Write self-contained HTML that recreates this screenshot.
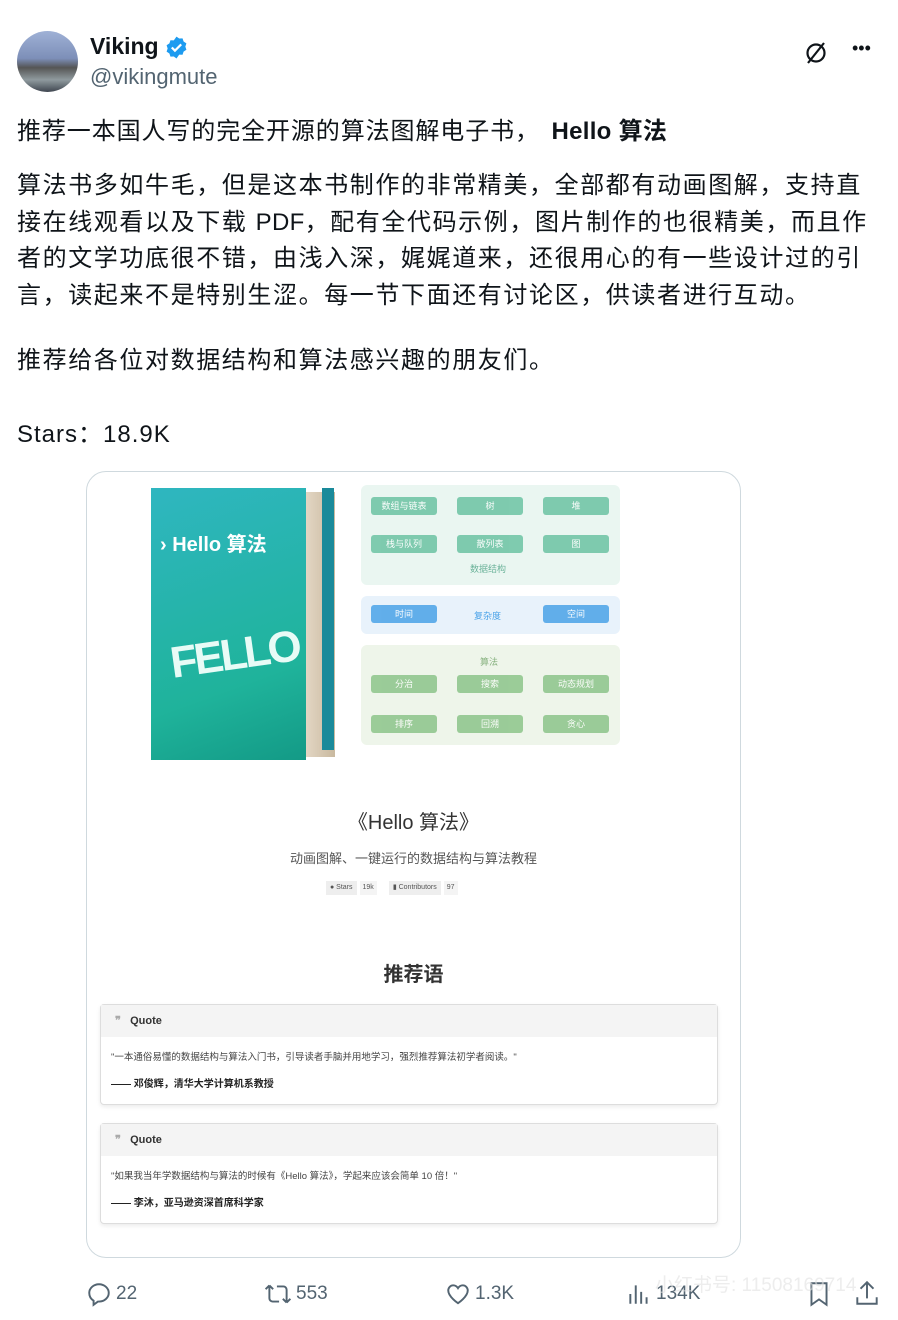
<!DOCTYPE html>
<html><head><meta charset="utf-8"><style>
*{margin:0;padding:0;box-sizing:border-box}
body{width:898px;height:1320px;background:#fff;font-family:"Liberation Sans","Noto Sans CJK SC",sans-serif;color:#0f1419;position:relative;overflow:hidden}
.abs{position:absolute}
.t{font-size:24px;line-height:36.5px;left:17px;white-space:nowrap;letter-spacing:1.6px}
.l{letter-spacing:0.3px}
.bx{position:absolute;width:66px;height:18px;border-radius:3px;color:#fff;font-size:9px;text-align:center;line-height:18px;opacity:.85}
.g{background:#6cc3a3}.b{background:#4aa3e8}.gg{background:#8cc48a}
.q{position:absolute;left:100px;width:618px;height:101px;border:1px solid #ddd;border-radius:4px;box-shadow:0 2px 4px rgba(0,0,0,.08);background:#fff}
.qh{height:32px;background:#f4f4f4;font-size:11px;font-weight:bold;color:#333;line-height:32px;padding-left:14px}
.qt{font-size:9.5px;color:#444;padding:12px 0 0 10px}
.qa{font-size:10px;font-weight:bold;color:#222;padding:12px 0 0 10px}
.act{position:absolute;top:1281px;font-size:19px;color:#536471;display:flex;align-items:center;gap:4px}
</style></head><body>
<div class="abs" style="left:17px;top:31px;width:61px;height:61px;border-radius:50%;background:linear-gradient(#9fb1d6 0%,#7d8fb8 45%,#555 60%,#8f9a9e 80%,#3f4650)"></div>
<div class="abs" style="left:90px;top:33px;font-size:23px;font-weight:bold">Viking</div>
<svg class="abs" style="left:164px;top:35px" width="25" height="25" viewBox="0 0 24 24"><path fill="#1d9bf0" d="M12 1.5l2.6 1.9 3.2-.2 1 3 2.7 1.8-1 3.1 1 3.1-2.7 1.8-1 3-3.2-.2L12 22.5l-2.6-1.9-3.2.2-1-3-2.7-1.8 1-3.1-1-3.1 2.7-1.8 1-3 3.2.2z"/><path d="M7.5 12l3 3 6-6" stroke="#fff" stroke-width="2.2" fill="none"/></svg>
<div class="abs" style="left:90px;top:64px;font-size:22px;color:#536471">@vikingmute</div>
<svg class="abs" style="left:803px;top:40px" width="26" height="26" viewBox="0 0 26 26"><circle cx="13" cy="13" r="8.5" fill="none" stroke="#0f1419" stroke-width="2.2"/><path d="M21 3L5 23" stroke="#0f1419" stroke-width="2.2"/></svg>
<div class="abs" style="left:852px;top:38px;font-size:18px;color:#0f1419">•••</div>
<div class="abs t" style="top:114px;letter-spacing:0.9px">推荐一本国人写的完全开源的算法图解电子书， <b class="l" style="margin-left:4px">Hello 算法</b></div>
<div class="abs t" style="top:168px">算法书多如牛毛，但是这本书制作的非常精美，全部都有动画图解，支持直<br>接在线观看以及下载 <span class="l">PDF</span>，配有全代码示例，图片制作的也很精美，而且作<br>者的文学功底很不错，由浅入深，娓娓道来，还很用心的有一些设计过的引<br>言，读起来不是特别生涩。每一节下面还有讨论区，供读者进行互动。</div>
<div class="abs t" style="top:343px">推荐给各位对数据结构和算法感兴趣的朋友们。</div>
<div class="abs t" style="top:417px;letter-spacing:1px">Stars：18.9K</div>
<div class="abs" style="left:86px;top:471px;width:655px;height:787px;border:1px solid #cfd9de;border-radius:20px"></div>
<div class="abs" style="left:300px;top:492px;width:35px;height:265px;background:linear-gradient(90deg,#e8dccb,#c9b99f);"></div>
<div class="abs" style="left:322px;top:488px;width:12px;height:262px;background:#1a8a9a"></div>
<div class="abs" style="left:151px;top:488px;width:155px;height:272px;background:linear-gradient(160deg,#2fb6c0,#1fb39b 70%,#139a86)"></div>
<div class="abs" style="left:160px;top:528px;font-size:20px;font-weight:bold;color:#fff">› Hello 算法</div>
<div class="abs" style="left:170px;top:630px;font-size:44px;font-weight:bold;color:#e8fbf6;letter-spacing:-3px;transform:rotate(-8deg)">FELLO</div>
<div class="abs" style="left:361px;top:485px;width:259px;height:100px;background:#eaf6f1;border-radius:6px"></div>
<div class="abs" style="left:361px;top:596px;width:259px;height:38px;background:#e8f2fb;border-radius:6px"></div>
<div class="abs" style="left:361px;top:645px;width:259px;height:100px;background:#eef5ea;border-radius:6px"></div>
<div class="bx g" style="left:371px;top:497px">数组与链表</div><div class="bx g" style="left:457px;top:497px">树</div><div class="bx g" style="left:543px;top:497px">堆</div>
<div class="bx g" style="left:371px;top:535px">栈与队列</div><div class="bx g" style="left:457px;top:535px">散列表</div><div class="bx g" style="left:543px;top:535px">图</div>
<div class="abs" style="left:470px;top:562px;font-size:9px;color:#6cb39a">数据结构</div>
<div class="bx b" style="left:371px;top:605px">时间</div><div class="abs" style="left:474px;top:609px;font-size:9px;color:#4aa3e8">复杂度</div><div class="bx b" style="left:543px;top:605px">空间</div>
<div class="abs" style="left:480px;top:655px;font-size:9px;color:#88b280">算法</div>
<div class="bx gg" style="left:371px;top:675px">分治</div><div class="bx gg" style="left:457px;top:675px">搜索</div><div class="bx gg" style="left:543px;top:675px">动态规划</div>
<div class="bx gg" style="left:371px;top:715px">排序</div><div class="bx gg" style="left:457px;top:715px">回溯</div><div class="bx gg" style="left:543px;top:715px">贪心</div>
<div class="abs" style="left:86px;width:655px;top:806px;text-align:center;font-size:20px;color:#333">《Hello 算法》</div>
<div class="abs" style="left:86px;width:655px;top:848px;text-align:center;font-size:13px;color:#555">动画图解、一键运行的数据结构与算法教程</div>
<div class="abs" style="left:326px;top:881px;height:14px;font-size:7px;color:#555;display:flex;gap:3px;line-height:14px">
<span style="background:#eee;padding:0 4px">● Stars</span><span style="background:#f4f4f4;padding:0 3px">19k</span><span style="width:6px"></span><span style="background:#eee;padding:0 4px">▮ Contributors</span><span style="background:#f4f4f4;padding:0 3px">97</span></div>
<div class="abs" style="left:86px;width:655px;top:958px;text-align:center;font-size:20px;font-weight:bold;color:#333">推荐语</div>
<div class="q" style="top:1004px"><div class="qh"><span style="color:#aaa">❞</span>&nbsp;&nbsp;&nbsp;Quote</div><div class="qt">"一本通俗易懂的数据结构与算法入门书，引导读者手脑并用地学习，强烈推荐算法初学者阅读。"</div><div class="qa">—— 邓俊辉，清华大学计算机系教授</div></div>
<div class="q" style="top:1123px"><div class="qh"><span style="color:#aaa">❞</span>&nbsp;&nbsp;&nbsp;Quote</div><div class="qt">"如果我当年学数据结构与算法的时候有《Hello 算法》，学起来应该会简单 10 倍！"</div><div class="qa">—— 李沐，亚马逊资深首席科学家</div></div>
<div class="act" style="left:86px"><svg width="26" height="26" viewBox="0 0 24 24" fill="none" stroke="#536471" stroke-width="1.8"><path d="M12 3c5 0 9 3.6 9 8s-4 8-9 8h-1l-4 3v-3.8C4.6 16.7 3 14 3 11c0-4.4 4-8 9-8z"/></svg>22</div>
<div class="act" style="left:264px"><svg width="28" height="26" viewBox="0 0 26 24" fill="none" stroke="#536471" stroke-width="1.8"><path d="M5 4L1.5 7.5M5 4l3.5 3.5M5 4v12a3 3 0 003 3h6M21 20l-3.5-3.5M21 20l3.5-3.5M21 20V8a3 3 0 00-3-3h-6"/></svg>553</div>
<div class="act" style="left:445px"><svg width="26" height="26" viewBox="0 0 24 24" fill="none" stroke="#536471" stroke-width="1.8"><path d="M12 20.5S3 14.5 3 8.8C3 6 5.2 4 7.6 4c1.8 0 3.4 1 4.4 2.6C13 5 14.6 4 16.4 4 18.8 4 21 6 21 8.8c0 5.7-9 11.7-9 11.7z"/></svg>1.3K</div>
<div class="act" style="left:626px"><svg width="26" height="26" viewBox="0 0 24 24" stroke="#536471" stroke-width="1.8"><path d="M4 21V12M9 21V4M14 21V10M19 21V15"/></svg>134K</div>
<svg class="abs" style="left:806px;top:1280px" width="26" height="28" viewBox="0 0 24 26" fill="none" stroke="#536471" stroke-width="1.8"><path d="M5 3h14v20l-7-5-7 5z"/></svg>
<svg class="abs" style="left:854px;top:1279px" width="26" height="28" viewBox="0 0 24 26" fill="none" stroke="#536471" stroke-width="1.8"><path d="M12 3v15M6 9l6-6 6 6M3 17v6h18v-6"/></svg>
<div class="abs" style="left:655px;top:1270px;font-size:19px;color:rgba(225,225,225,.6)">小红书号: 11508169714</div>
</body></html>
